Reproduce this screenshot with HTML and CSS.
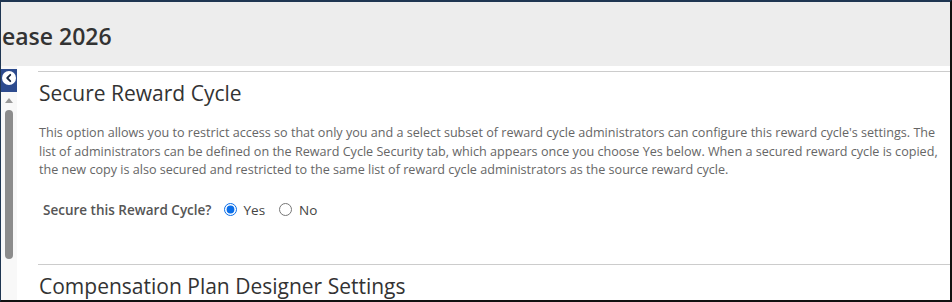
FILE: index.html
```html
<!DOCTYPE html>
<html lang="en">
<head>
  <meta charset="UTF-8">
  <title>Secure Reward Cycle</title>
  <link rel="stylesheet" href="styles.css">
</head>
<body>
  <div class="frame">
    <header class="page-title">ease 2026</header>

    <div class="main">
      <aside class="rail">
        <button class="collapse-btn" aria-label="Collapse">
          <svg width="14" height="14" viewBox="0 0 14 14">
            <circle cx="7" cy="7" r="7" fill="#fff"/>
            <path d="M8.3 3.8 L5.2 7 L8.3 10.2" fill="none" stroke="#1b2a44" stroke-width="1.8" stroke-linecap="round" stroke-linejoin="round"/>
          </svg>
        </button>
        <div class="scroll-up"></div>
        <div class="scroll-thumb"></div>
      </aside>

      <div class="content">
        <section class="section">
          <h2>Secure Reward Cycle</h2>
          <p class="desc">This option allows you to restrict access so that only you and a select subset of reward cycle administrators can configure this reward cycle's settings. The list of administrators can be defined on the Reward Cycle Security tab, which appears once you choose Yes below. When a secured reward cycle is copied, the new copy is also secured and restricted to the same list of reward cycle administrators as the source reward cycle.</p>
          <div class="field">
            <span class="field-label">Secure this Reward Cycle?</span>
            <label class="radio"><input type="radio" name="secure" checked> Yes</label>
            <label class="radio"><input type="radio" name="secure"> No</label>
          </div>
        </section>

        <section class="section">
          <h2>Compensation Plan Designer Settings</h2>
        </section>
      </div>
    </div>
  </div>
</body>
</html>
```

FILE: styles.css
```css
* {
  margin: 0;
  padding: 0;
  box-sizing: border-box;
}

body {
  font-family: 'Open Sans', 'Noto Sans', sans-serif;
  background: #fff;
  color: #333;
}

.frame {
  width: 952px;
  height: 302px;
  overflow: hidden;
  border-top: 2px solid #1f3652;
  border-left: 1px solid #1f3652;
  border-right: 2px solid #111;
  border-bottom: 2px solid #111;
}

.page-title {
  height: 64px;
  background: #ededed;
  font-size: 23px;
  font-weight: 600;
  color: #333;
  padding: 18px 0 0 1px;
  line-height: 32px;
}

.main {
  display: flex;
  height: 234px;
}

.rail {
  width: 16px;
  background: #f8f8f8;
  display: flex;
  flex-direction: column;
  align-items: center;
  padding-top: 3px;
}

.collapse-btn {
  width: 16px;
  height: 23px;
  background: #2d4b8e;
  border: none;
  display: flex;
  align-items: center;
  justify-content: center;
  padding-bottom: 5px;
}

.scroll-up {
  margin-top: 6px;
  width: 0;
  height: 0;
  border-left: 4px solid transparent;
  border-right: 4px solid transparent;
  border-bottom: 5px solid #999;
}

.scroll-thumb {
  margin-top: 7px;
  width: 8px;
  height: 149px;
  background: #8c8c8c;
  border-radius: 4px;
}

.content {
  flex: 1;
  padding-left: 21px;
  padding-top: 5px;
}

.section {
  border-top: 1px solid #ccc;
  padding-left: 1px;
}

.section h2 {
  font-size: 21px;
  font-weight: 400;
  color: #333;
  line-height: 30px;
  margin-top: 6px;
}

.desc {
  font-size: 12.6px;
  color: #666;
  line-height: 18.5px;
  margin-top: 16px;
  padding-right: 4px;
}

.field {
  display: flex;
  align-items: center;
  margin: 21px 0 45px 4px;
  font-size: 13.5px;
  color: #444;
}

.field-label {
  font-weight: 600;
  color: #555;
  margin-right: 12px;
}

.radio {
  display: flex;
  align-items: center;
  margin-right: 14px;
}

.radio input {
  width: 13px;
  height: 13px;
  margin: 0 7px 0 0;
  accent-color: #0b6ee8;
}
```
